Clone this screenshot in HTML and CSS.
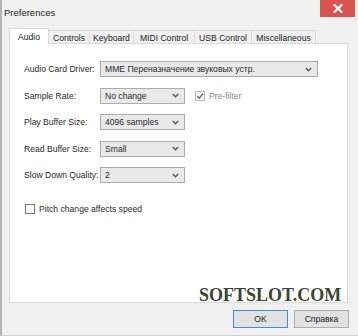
FILE: index.html
```html
<!DOCTYPE html>
<html>
<head>
<meta charset="utf-8">
<link rel="stylesheet" href="styles.css">
</head>
<body>
<div class="window">
  <div class="titlebar">
    <span class="title">Preferences</span>
    <div class="close">
      <svg width="10" height="9" viewBox="0 0 10 9"><path d="M1.5 1 L8.5 8 M8.5 1 L1.5 8" stroke="#fff" stroke-width="2.2" stroke-linecap="square"/></svg>
    </div>
  </div>
  <div class="content">
    <div class="tabs">
      <div class="tab active">Audio</div>
      <div class="tab">Controls</div>
      <div class="tab">Keyboard</div>
      <div class="tab">MIDI Control</div>
      <div class="tab">USB Control</div>
      <div class="tab">Miscellaneous</div>
    </div>
    <div class="panel">
      <div class="row">
        <span class="label">Audio Card Driver:</span>
        <div class="select wide"><span>MME Переназначение звуковых устр.</span><svg class="chev" width="7" height="5" viewBox="0 0 7 5"><path d="M0.8 1 L3.5 3.7 L6.2 1" fill="none" stroke="#555" stroke-width="1.4"/></svg></div>
      </div>
      <div class="row">
        <span class="label">Sample Rate:</span>
        <div class="select"><span>No change</span><svg class="chev" width="7" height="5" viewBox="0 0 7 5"><path d="M0.8 1 L3.5 3.7 L6.2 1" fill="none" stroke="#555" stroke-width="1.4"/></svg></div>
        <div class="check prefilter">
          <div class="box checked"><svg width="8" height="8" viewBox="0 0 8 8"><path d="M1.2 4.2 L3.2 6.2 L7 1.6" fill="none" stroke="#6a6a6a" stroke-width="1.3"/></svg></div>
          <span class="dim">Pre-filter</span>
        </div>
      </div>
      <div class="row">
        <span class="label">Play Buffer Size:</span>
        <div class="select"><span>4096 samples</span><svg class="chev" width="7" height="5" viewBox="0 0 7 5"><path d="M0.8 1 L3.5 3.7 L6.2 1" fill="none" stroke="#555" stroke-width="1.4"/></svg></div>
      </div>
      <div class="row">
        <span class="label">Read Buffer Size:</span>
        <div class="select"><span>Small</span><svg class="chev" width="7" height="5" viewBox="0 0 7 5"><path d="M0.8 1 L3.5 3.7 L6.2 1" fill="none" stroke="#555" stroke-width="1.4"/></svg></div>
      </div>
      <div class="row">
        <span class="label">Slow Down Quality:</span>
        <div class="select"><span>2</span><svg class="chev" width="7" height="5" viewBox="0 0 7 5"><path d="M0.8 1 L3.5 3.7 L6.2 1" fill="none" stroke="#555" stroke-width="1.4"/></svg></div>
      </div>
      <div class="check pitch">
        <div class="box"></div>
        <span>Pitch change affects speed</span>
      </div>
      <div class="watermark">SOFTSLOT.COM</div>
    </div>
    <div class="buttons">
      <div class="btn default">OK</div>
      <div class="btn">Справка</div>
    </div>
  </div>
</div>
</body>
</html>
```
FILE: styles.css
```css
* { box-sizing: border-box; }
html, body { margin: 0; padding: 0; background: #f0f0f0; }
body {
  font-family: "Liberation Sans", Arial, sans-serif;
  font-size: 8.6px;
  color: #2a2a2a;
}
.window {
  width: 358px;
  height: 336px;
  background: #f0f0f0;
  border-left: 2px solid #b4b4b4;
  border-bottom: 1px solid #d0d0d0;
  position: relative;
}
.titlebar {
  height: 24px;
  display: flex;
  align-items: flex-start;
  justify-content: space-between;
}
.title {
  font-size: 9.5px;
  margin: 7px 0 0 2px;
  color: #222;
}
.close {
  width: 35px;
  height: 17px;
  background: #d9534f;
  margin-right: 3px;
  display: flex;
  align-items: center;
  justify-content: center;
}
.content {
  padding-left: 7px;
}
.tabs {
  display: flex;
  align-items: flex-end;
  height: 19px;
  padding-left: 1px;
  position: relative;
  z-index: 2;
}
.tab {
  height: 13px;
  border: 1px solid #d9d9d9;
  border-bottom: none;
  border-left: none;
  background: #f0f0f0;
  display: flex;
  align-items: center;
  justify-content: center;
  color: #222;
  padding-top: 1px;
  white-space: nowrap;
}
.tab.active {
  height: 16px;
  background: #fff;
  border-left: 1px solid #d9d9d9;
  margin-bottom: -1px;
  margin-left: -1px;
  padding-top: 0;
}
.tab:nth-child(1) { width: 40px; }
.tab:nth-child(2) { width: 41px; }
.tab:nth-child(3) { width: 44px; }
.tab:nth-child(4) { width: 61px; }
.tab:nth-child(5) { width: 57px; }
.tab:nth-child(6) { width: 64px; }
.panel {
  width: 339px;
  height: 260px;
  background: #fff;
  border: 1px solid #d9d9d9;
  padding: 17px 0 0 14px;
  display: flex;
  flex-direction: column;
  gap: 10.5px;
  position: relative;
}
.row {
  display: flex;
  align-items: center;
  height: 16px;
}
.label {
  width: 76px;
  flex: none;
  white-space: nowrap;
}
.select {
  width: 85px;
  height: 16px;
  border: 1px solid #acacac;
  background: #e9e9e9;
  display: flex;
  align-items: center;
  justify-content: space-between;
  padding: 0 5px 0 4px;
  white-space: nowrap;
}
.select.wide { width: 218px; }
.chev { flex: none; }
.check {
  display: flex;
  align-items: center;
  gap: 4px;
  white-space: nowrap;
}
.prefilter { margin-left: 10px; }
.pitch { margin-top: 10px; margin-left: 1px; }
.box {
  width: 10px;
  height: 10px;
  border: 1px solid #7a7a7a;
  background: #fff;
  display: flex;
  align-items: center;
  justify-content: center;
}
.box.checked {
  border-color: #bcbcbc;
  background: #f4f4f4;
}
.dim { color: #8a8a8a; }
.watermark {
  position: absolute;
  left: 189px;
  top: 241px;
  font-family: "Liberation Serif", "Times New Roman", serif;
  font-weight: bold;
  font-size: 18px;
  color: #3a4630;
}
.buttons {
  display: flex;
  justify-content: flex-end;
  gap: 6px;
  padding: 7px 9px 0 0;
  width: 349px;
}
.btn {
  width: 55px;
  height: 18px;
  border: 1px solid #adadad;
  background: #e1e1e1;
  display: flex;
  align-items: center;
  justify-content: center;
  color: #222;
}
.btn.default {
  border-color: #3c8fd8;
}
```
